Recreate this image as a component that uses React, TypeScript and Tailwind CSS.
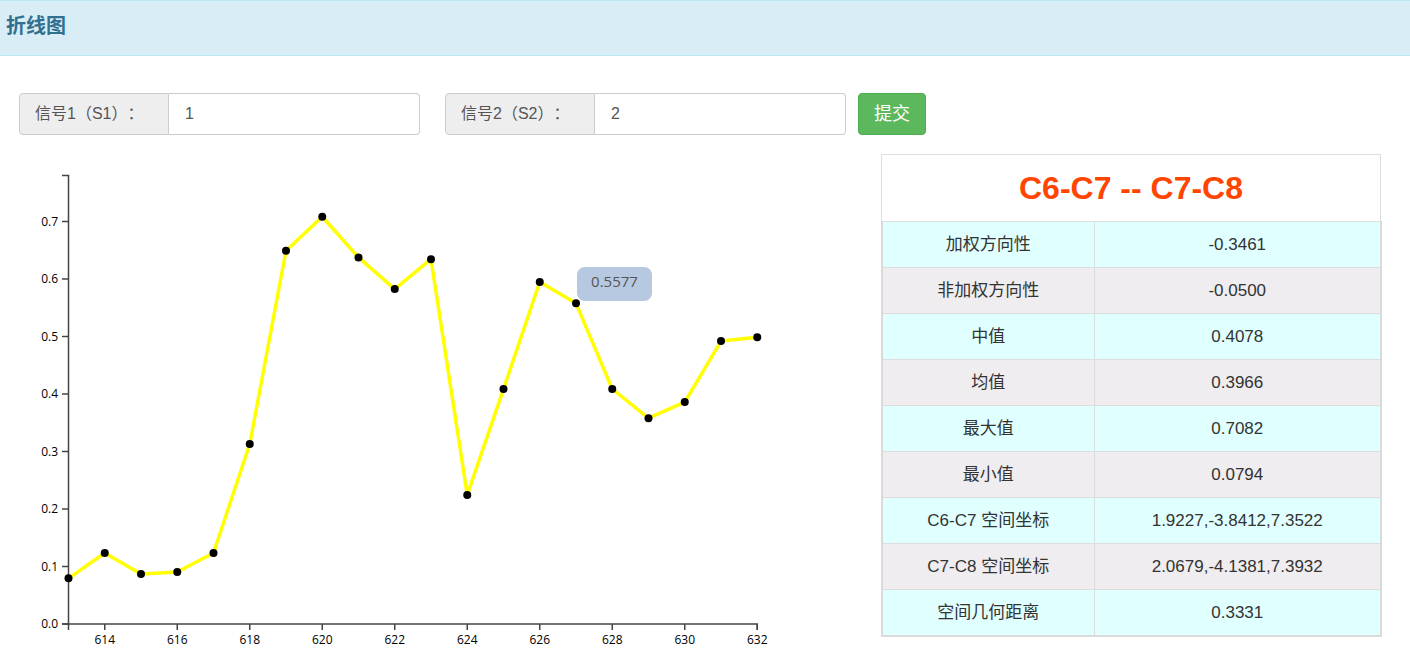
import React from "react";

const values = [
  0.0794, 0.1235, 0.087, 0.0905, 0.1235, 0.313, 0.649, 0.7082, 0.6375, 0.5825,
  0.6345, 0.2245, 0.4085, 0.5948, 0.5577, 0.4087, 0.358, 0.386, 0.492, 0.4985,
];

const xOf = (i: number) => 68.5 + i * 36.25;
const yOf = (v: number) => 470 - v * 575;

const rows: [string, string][] = [
  ["加权方向性", "-0.3461"],
  ["非加权方向性", "-0.0500"],
  ["中值", "0.4078"],
  ["均值", "0.3966"],
  ["最大值", "0.7082"],
  ["最小值", "0.0794"],
  ["C6-C7 空间坐标", "1.9227,-3.8412,7.3522"],
  ["C7-C8 空间坐标", "2.0679,-4.1381,7.3932"],
  ["空间几何距离", "0.3331"],
];

function Chart() {
  const pts = values.map((v, i) => `${xOf(i)},${yOf(v)}`).join(" ");
  const yTicks = [0, 0.1, 0.2, 0.3, 0.4, 0.5, 0.6, 0.7];
  const xTicks = [614, 616, 618, 620, 622, 624, 626, 628, 630, 632];
  return (
    <div className="relative w-[881px] h-[500px] shrink-0">
      <svg width="881" height="500" className="block">
        <g fontFamily="'Open Sans', 'Liberation Sans', sans-serif" fontSize="12" fill="#000">
          {yTicks.map((t) => (
            <g key={t}>
              <line x1={62} x2={68.5} y1={yOf(t)} y2={yOf(t)} stroke="#444" strokeWidth="1.5" />
              <text x={58} y={yOf(t) + 4} textAnchor="end">
                {t.toFixed(1)}
              </text>
            </g>
          ))}
          {xTicks.map((t) => (
            <g key={t}>
              <line x1={xOf(t - 613)} x2={xOf(t - 613)} y1={470} y2={476} stroke="#444" strokeWidth="1.5" />
              <text x={xOf(t - 613)} y={490} textAnchor="middle">
                {t}
              </text>
            </g>
          ))}
        </g>
        <path d="M62,21.5 H68.5 V470 H62" fill="none" stroke="#444" strokeWidth="1.5" />
        <path d="M68.5,476 V470 H757.25 V476" fill="none" stroke="#444" strokeWidth="1.5" />
        <polyline points={pts} fill="none" stroke="#ffff00" strokeWidth="3.5" strokeLinejoin="round" />
        {values.map((v, i) => (
          <circle key={i} cx={xOf(i)} cy={yOf(v)} r="4" fill="#000" />
        ))}
      </svg>
      <div className="absolute left-[577px] top-[113px] w-[75px] h-[34px] rounded-[8px] bg-[#b7c9e1] text-[#555] text-[15px] font-['Open_Sans','Liberation_Sans',sans-serif] flex justify-center pt-[3px]">
        0.5577
      </div>
    </div>
  );
}

function InfoTable() {
  return (
    <div className="w-[501px] shrink-0">
      <div className="w-[500px] h-[67px] border border-b-0 border-[#ddd] flex items-center justify-center">
        <span className="text-[32px] font-bold text-[#ff4500] font-['Liberation_Sans',sans-serif] leading-none">
          C6-C7 -- C7-C8
        </span>
      </div>
      <table className="w-[501px] border-collapse border-2 border-t-0 border-[#dadada] text-[17px] text-[#333]">
        <tbody>
          {rows.map(([k, v], i) => (
            <tr key={k} className={i % 2 === 0 ? "bg-[#e0ffff]" : "bg-[#efedf0]"}>
              <td className="w-[212px] h-[46px] border border-[#ddd] text-center align-middle p-0">{k}</td>
              <td className="h-[46px] border border-[#ddd] text-center align-middle p-0">{v}</td>
            </tr>
          ))}
        </tbody>
      </table>
    </div>
  );
}

function InputGroup({ label, value }: { label: string; value: string }) {
  return (
    <div className="flex w-[401px] h-[42px]">
      <div className="w-[150px] h-full bg-[#eee] border border-[#ccc] rounded-l-[4px] flex items-center pl-[15px] text-[16px] text-[#555] shrink-0 [text-spacing-trim:space-all] whitespace-nowrap">
        {label}
      </div>
      <input
        readOnly
        value={value}
        className="flex-1 min-w-0 h-full border border-l-0 border-[#ccc] rounded-r-[4px] pl-[16px] text-[16px] text-[#555] outline-none bg-white"
      />
    </div>
  );
}

export default function App() {
  return (
    <div className="w-[1410px] h-[670px] bg-white overflow-hidden font-['Liberation_Sans','Noto_Sans_CJK_SC',sans-serif]">
      <div className="h-[56px] bg-[#d9edf7] border-y border-[#bce8f1] flex items-center pl-[6px] pb-[4px]">
        <span className="text-[20px] font-bold text-[#31708f]">折线图</span>
      </div>
      <div className="flex items-center pl-[19px] mt-[37px]">
        <InputGroup label="信号1（S1）：" value="1" />
        <div className="ml-[25px]">
          <InputGroup label="信号2（S2）：" value="2" />
        </div>
        <button className="ml-[12px] w-[68px] h-[42px] bg-[#5cb85c] border border-[#4cae4c] rounded-[4px] text-white text-[18px]">
          提交
        </button>
      </div>
      <div className="flex items-start mt-[19px]">
        <Chart />
        <InfoTable />
      </div>
    </div>
  );
}
